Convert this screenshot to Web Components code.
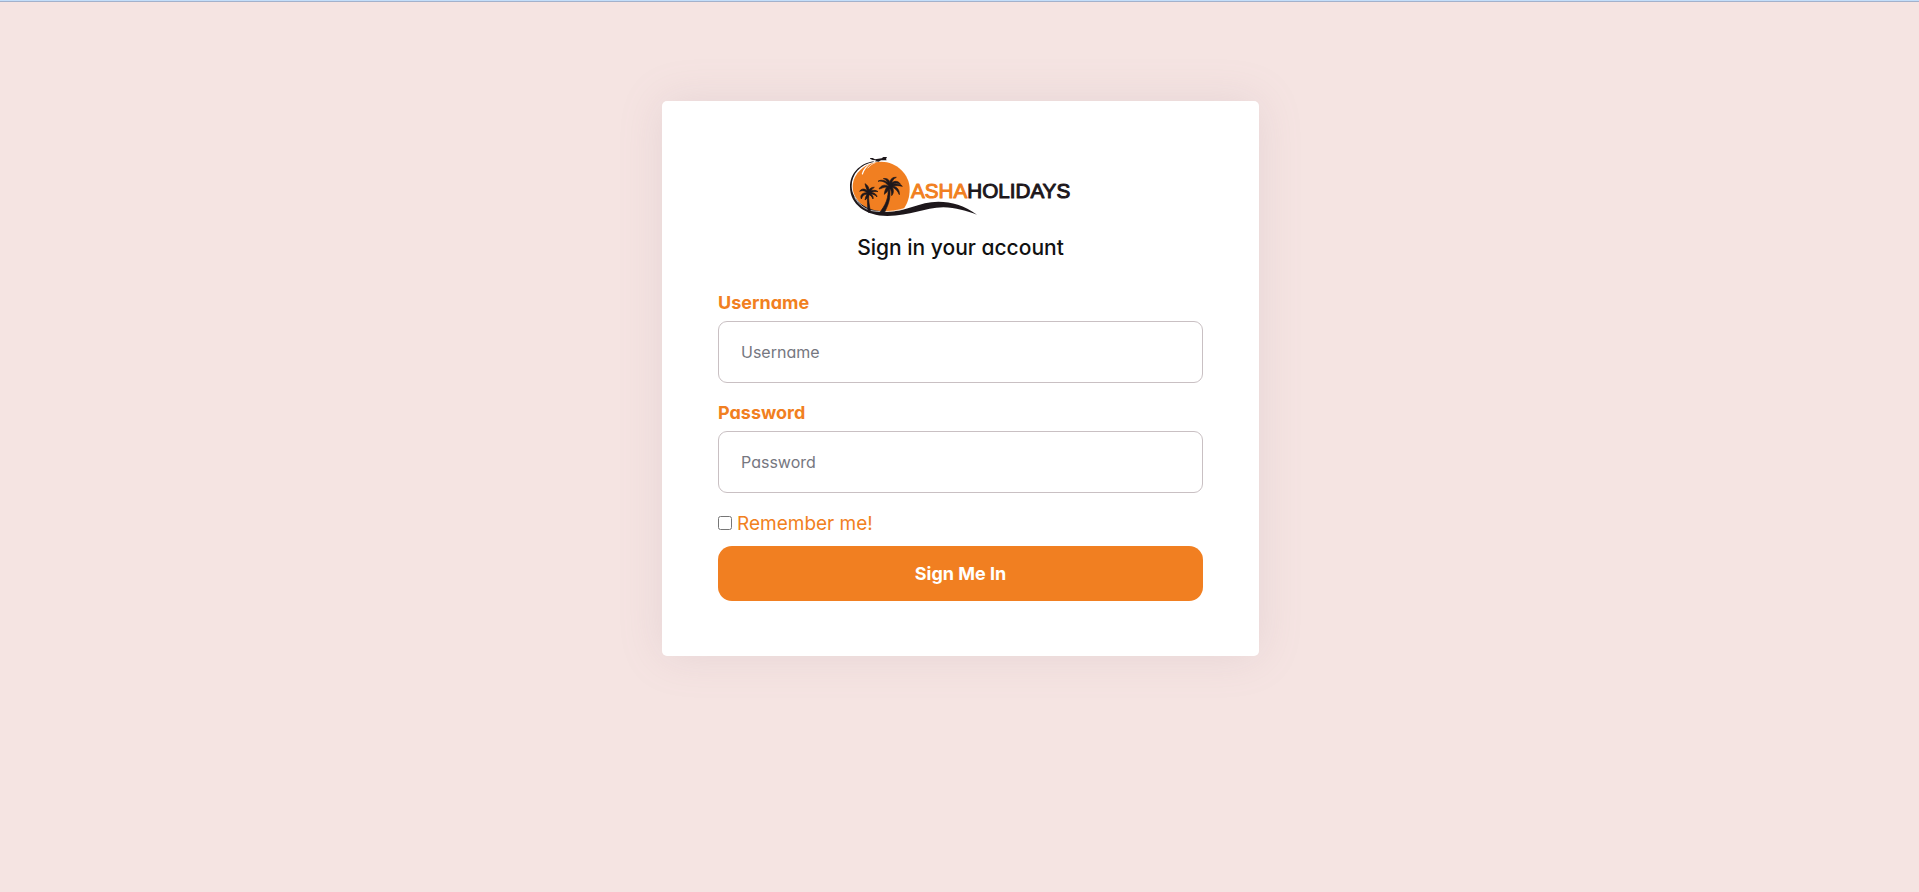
<!DOCTYPE html>
<html lang="en">
<head>
<meta charset="utf-8">
<meta name="viewport" content="width=device-width, initial-scale=1">
<title>Asha Holidays - Sign in</title>
<style>
  html, body { margin: 0; min-height: 100%; }
  body {
    --brand: #f17f21;
    background: #f5e4e2;
    color: #111;
    font: 16px/24px Inter, "Open Sans", sans-serif;
    font-feature-settings: "cv11";
  }
</style>
</head>
<body>
<login-page>
  <login-card>
    <brand-logo slot="logo"></brand-logo>
    <span slot="title">Sign in your account</span>
    <text-field label="Username" type="text" name="username"></text-field>
    <text-field label="Password" type="password" name="password"></text-field>
    <check-field label="Remember me!"></check-field>
    <primary-button>Sign Me In</primary-button>
  </login-card>
</login-page>

<script>
function define(name, html, setup) {
  const template = document.createElement('template');
  template.innerHTML = html;
  customElements.define(name, class extends HTMLElement {
    constructor() {
      super();
      this.attachShadow({ mode: 'open' }).append(template.content.cloneNode(true));
    }
    connectedCallback() { if (setup) setup(this, this.shadowRoot); }
  });
}

define('login-page', `
  <style>
    :host { display: block; box-sizing: border-box; min-height: 100vh;
      border-top: 1px solid #c3defa; box-shadow: inset 0 1px #a3b1cb; padding: 100px 16px 32px 18px; }
    main { max-width: 597px; margin: 0 auto; }
  </style>
  <main><slot></slot></main>`);

define('login-card', `
  <style>
    :host { display: block; background: #fff; border-radius: 5px; padding: 56px 56px 55px;
      box-shadow: 0 0 45px rgba(154, 130, 150, .16); }
    header { display: flex; flex-direction: column; align-items: center; gap: 16px; margin-bottom: 28px; }
    h1 { margin: 0; font-size: 21px; line-height: 30px; font-weight: 500; }
    form { display: flex; flex-direction: column; gap: 18px; }
  </style>
  <header><slot name="logo"></slot><h1><slot name="title"></slot></h1></header>
  <form><slot></slot></form>`);

define('brand-logo', `
  <style>
    :host { display: block; }
    svg { display: block; width: 222px; height: 60px; overflow: visible; }
    text { font: 62px "Liberation Sans", Arial, sans-serif; stroke-width: 3; stroke-linejoin: round; }
    .sun { fill: var(--brand); }
    .ink { fill: #1d171b; }
    .palms { stroke: #1d171b; stroke-width: 2; stroke-linejoin: round; }
    .asha { fill: var(--brand); stroke: var(--brand); }
    .holidays { fill: #1d171b; stroke: #1d171b; }
  </style>
  <svg viewBox="30 36 666 180" role="img" aria-label="Asha Holidays">
    <path class="sun" d="M124 50C170 50 209 88 209 132C209 157 202 178 190 192C165 199 140 203 112 200C68 188 38 160 38 125C38 84 78 50 124 50Z"/>
    <path d="M65 87C69 72 79 61 94 54C81 64 73 75 68 89Z" fill="#fff"/>
    <path d="M83 70C90 61 97 56 106 53" fill="none" stroke="#fff" stroke-width="2"/>
    <path class="ink" d="M101 49C58 56 30 86 30 126C30 177 77 213 142 213C211 213 252 188 310 187C347 187 381 199 411 209C372 181 336 170 295 170C236 170 202 200 142 200C80 200 36 168 35 124C35 87 61 58 101 51Z"/>
    <path d="M44 157C57 181 77 195 102 198C133 202 165 199 194 190" fill="none" stroke="#fff" stroke-width="2"/>
    <path class="ink" d="M90 39L98 39L105 43L125 40L130 36L141 36L138 42L140 46L123 46L116 50L104 49L109 46L98 45L91 42Z"/>
    <g class="ink palms">
      <path d="M148 124C154 157 146 178 132 205L116 206C138 180 147 157 144 126Z"/>
      <path d="M148 126C139 113 128 106 114 109C121 103 137 105 145 115C140 105 136 103 130 101C142 98 149 106 149 113C151 102 158 96 169 97C161 101 157 107 155 114C164 106 177 108 181 118C173 113 165 114 158 118C173 115 185 119 187 124C177 121 168 122 159 123C172 126 179 136 178 149C173 138 167 131 157 127C162 136 161 146 155 152C155 141 153 133 148 129C145 133 144 140 133 148C134 138 136 132 141 126C131 126 124 131 117 132C122 122 132 118 142 122Z"/>
      <path d="M86 148C85 166 88 182 92 203L84 201C83 181 81 164 83 148Z"/>
      <path d="M84 146C77 137 68 135 59 139C64 130 75 130 82 138C80 132 77 125 75 116C83 120 87 128 87 135C91 129 97 126 103 127C98 130 95 135 93 138C101 134 110 136 114 140C106 139 99 140 93 143C104 143 111 149 111 156C106 150 100 147 92 147C98 151 101 156 99 162C96 155 92 150 86 149C85 155 81 161 75 165C76 158 78 153 81 148C73 147 67 153 64 162C59 151 67 143 80 143Z"/>
    </g>
    <text x="213" y="160"><tspan class="asha">ASHA</tspan><tspan class="holidays">HOLIDAYS</tspan></text>
  </svg>`);

define('text-field', `
  <style>
    :host { display: flex; flex-direction: column; gap: 6px; }
    label { color: var(--brand); font-size: 18px; font-weight: 700; line-height: 24px; }
    input { box-sizing: border-box; width: 100%; height: 62px; padding: 0 22px; border: 1px solid #c9c0c3;
      border-radius: 9px; background: #fff; color: #111; font: inherit; font-feature-settings: inherit; }
    input::placeholder { color: #76777f; opacity: 1; }
  </style>
  <label for="field"></label><input id="field">`,
  (host, root) => {
    const label = host.getAttribute('label');
    const input = root.querySelector('input');
    root.querySelector('label').textContent = label;
    input.type = host.getAttribute('type');
    input.name = host.getAttribute('name');
    input.placeholder = label;
  });

define('check-field', `
  <style>
    :host { display: flex; align-items: center; gap: 5px; color: var(--brand); font-size: 19px; line-height: 26px; }
    input { width: 14px; height: 14px; margin: 0 0 2px; }
  </style>
  <input type="checkbox" id="check"><label for="check"></label>`,
  (host, root) => { root.querySelector('label').textContent = host.getAttribute('label'); });

define('primary-button', `
  <style>
    :host { display: block; margin-top: -9px; }
    button { display: block; width: 100%; height: 55px; border: 0; border-radius: 14px; padding: 0;
      background: var(--brand); color: #fff; font: inherit; font-feature-settings: inherit;
      font-size: 18px; font-weight: 700; cursor: pointer; }
  </style>
  <button type="button"><slot></slot></button>`);
</script>
</body>
</html>
